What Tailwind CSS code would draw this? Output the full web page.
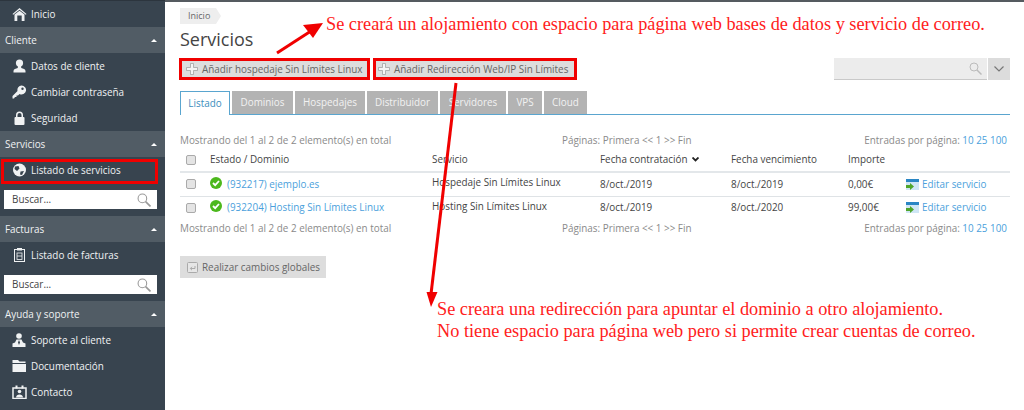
<!DOCTYPE html>
<html lang="es">
<head>
  <meta charset="UTF-8">
  <title>Servicios</title>
  <script src="https://cdn.jsdelivr.net/npm/@tailwindcss/browser@4"></script>
</head>
<body class="w-[1024px] h-[410px] overflow-hidden bg-white font-['Open_Sans',sans-serif] text-[9.9px] text-[#444]">
<div class="relative flex w-[1024px] h-[410px]">

  <!-- Sidebar -->
  <aside class="w-[165px] h-full shrink-0 bg-[#38444f] text-[#f0f2f3] border-t border-[#2c353e]">
    <a class="flex items-center h-[26px] pl-[12px]">
      <svg class="w-[15px] h-[13px] mr-[4px] shrink-0" viewBox="0 0 15 13" fill="#eef0f2"><path d="M7.500 0 14.500 6 13.800 6.800 7.500 1.800 1.200 6.800.5 6Z"/><path d="M2.500 6.500 7.500 2.800 12.500 6.500V13H9.700V7.500H5.300V13H2.500Z"/></svg>
      <span>Inicio</span>
    </a>
    <div class="flex items-center justify-between h-[26px] px-[5px] bg-[#515c65]"><span>Cliente</span><span class="w-0 h-0 mr-[3px] border-x-[3px] border-x-transparent border-b-[3px] border-b-white"></span></div>
    <a class="flex items-center h-[26px] pl-[12px]">
      <svg class="w-[15px] h-[14px] mr-[4px] shrink-0" viewBox="0 0 15 14" fill="#f0f2f3"><circle cx="7.500" cy="4" r="3.600"/><path d="M5.800 6.500h3.400V9c2 .6 4.300 1.200 4.300 3v1.500h-12V12c0-1.800 2.300-2.400 4.300-3Z"/></svg>
      <span>Datos de cliente</span>
    </a>
    <a class="flex items-center h-[26px] pl-[12px]">
      <svg class="w-[15px] h-[14px] mr-[4px] shrink-0" viewBox="0 0 15 14" fill="#f0f2f3"><path d="M9.500 0.500a4.500 4.500 0 1 1-2 8.500L6 10.500H4.500V12H3L2 13.500H0.500V11L5.500 6A4.500 4.500 0 0 1 9.500 0.500ZM10.500 2.500a1.200 1.200 0 1 0 0 2.400 1.200 1.200 0 0 0 0-2.400Z"/></svg>
      <span>Cambiar contraseña</span>
    </a>
    <a class="flex items-center h-[26px] pl-[12px]">
      <svg class="w-[15px] h-[14px] mr-[4px] shrink-0" viewBox="0 0 15 14" fill="#f0f2f3"><path d="M4 6V4a3.500 3.500 0 0 1 7 0v2H9.500V4a2 2 0 0 0-4 0v2Z"/><rect x="2.500" y="6" width="10" height="8" rx="1"/></svg>
      <span>Seguridad</span>
    </a>
    <div class="flex items-center justify-between h-[26px] px-[5px] bg-[#515c65]"><span>Servicios</span><span class="w-0 h-0 mr-[3px] border-x-[3px] border-x-transparent border-b-[3px] border-b-white"></span></div>
    <a class="flex items-center h-[26px] pl-[12px]">
      <svg class="w-[15px] h-[14px] mr-[4px] shrink-0" viewBox="0 0 15 14"><circle cx="7.500" cy="7" r="6.500" fill="#f0f2f3"/><path d="M3 3.500 6.500 3 7.500 5.500 5 8 2.500 6ZM8.500 8.500 12 8 10 12 8 11.500Z" fill="#38444f"/></svg>
      <span>Listado de servicios</span>
    </a>
    <div class="flex items-center justify-between h-[19px] ml-[4px] mr-[8px] mt-[7px] mb-[7px] pl-[8px] pr-[6px] bg-white text-[#444]">
      <span>Buscar...</span>
      <svg class="w-[14px] h-[14px]" viewBox="0 0 13 13" fill="none" stroke="#999"><circle cx="5" cy="5" r="4"/><path d="M8 8 12.500 12.500" stroke-width="1.500"/></svg>
    </div>
    <div class="flex items-center justify-between h-[26px] px-[5px] bg-[#515c65]"><span>Facturas</span><span class="w-0 h-0 mr-[3px] border-x-[3px] border-x-transparent border-b-[3px] border-b-white"></span></div>
    <a class="flex items-center h-[26px] pl-[12px]">
      <svg class="w-[15px] h-[14px] mr-[4px] shrink-0" viewBox="0 0 15 14" fill="none" stroke="#f0f2f3"><rect x="2.500" y="1.500" width="10" height="12"/><rect x="5" y="0" width="5" height="2.500" fill="#f0f2f3" stroke="none"/><rect x="5" y="5" width="5" height="6.500" stroke-width=".8"/><path d="M5 8h5" stroke-width=".8"/></svg>
      <span>Listado de facturas</span>
    </a>
    <div class="flex items-center justify-between h-[19px] ml-[4px] mr-[8px] mt-[7px] mb-[7px] pl-[8px] pr-[6px] bg-white text-[#444]">
      <span>Buscar...</span>
      <svg class="w-[14px] h-[14px]" viewBox="0 0 13 13" fill="none" stroke="#999"><circle cx="5" cy="5" r="4"/><path d="M8 8 12.500 12.500" stroke-width="1.500"/></svg>
    </div>
    <div class="flex items-center justify-between h-[26px] px-[5px] bg-[#515c65]"><span>Ayuda y soporte</span><span class="w-0 h-0 mr-[3px] border-x-[3px] border-x-transparent border-b-[3px] border-b-white"></span></div>
    <a class="flex items-center h-[26px] pl-[12px]">
      <svg class="w-[15px] h-[14px] mr-[4px] shrink-0" viewBox="0 0 15 14" fill="#f0f2f3"><circle cx="7" cy="3" r="2.800"/><path d="M4.500 6.500h5L11 9.500l2.500 1V14H.5v-3.500L3 9.500Z"/><path d="M7 7 6 9.500 7 12 8 9.500Z" fill="#38444f"/></svg>
      <span>Soporte al cliente</span>
    </a>
    <a class="flex items-center h-[26px] pl-[12px]">
      <svg class="w-[15px] h-[14px] mr-[4px] shrink-0" viewBox="0 0 15 14" fill="#f0f2f3"><path d="M.5 1h5.500l1.500 1.500h6V4H.5Z"/><path d="M.5 5h13.500v8H.5Z"/></svg>
      <span>Documentación</span>
    </a>
    <a class="flex items-center h-[26px] pl-[12px]">
      <svg class="w-[15px] h-[14px] mr-[4px] shrink-0" viewBox="0 0 15 14"><rect x="1" y="3" width="13" height="10.500" fill="none" stroke="#f0f2f3" stroke-width="1.500"/><rect x="3.500" y="0.500" width="2" height="3" fill="#f0f2f3"/><rect x="9.500" y="0.500" width="2" height="3" fill="#f0f2f3"/><circle cx="7.500" cy="6.500" r="1.800" fill="#f0f2f3"/><path d="M4 12.500c0-4 7-4 7 0Z" fill="#f0f2f3"/></svg>
      <span>Contacto</span>
    </a>
  </aside>

  <!-- Main -->
  <main class="flex-1 border-t-2 border-[#555b60] pl-[15px] pr-[14px]">
    <div class="flex mt-[6px] h-[16px]">
      <span class="flex items-center pl-[8px] pr-[6px] bg-[#eeeeee] text-[9px] text-[#666]">Inicio</span>
      <span class="w-0 h-0 border-y-[8px] border-y-transparent border-l-[5px] border-l-[#eeeeee]"></span>
    </div>
    <h1 class="mt-[3px] h-[24px] text-[18px] leading-[24px] text-[#444]">Servicios</h1>

    <div class="flex items-start mt-[7px] h-[22px]">
      <div class="flex items-center shrink-0 w-[191px] h-[22px] -ml-[1px] border-[3px] border-[#f00000] bg-[#dddddd] pl-[4px] text-[#666]">
        <svg class="w-[12px] h-[12px] mr-[4px] shrink-0" viewBox="0 0 12 12" fill="#f4f4f4" stroke="#999" stroke-width=".7"><path d="M4.500.5h3v4h4v3h-4v4h-3v-4h-4v-3h4Z"/></svg>
        <span class="whitespace-nowrap">Añadir hospedaje Sin Límites Linux</span>
      </div>
      <div class="flex items-center shrink-0 w-[204px] h-[22px] ml-[3px] border-[3px] border-[#f00000] bg-[#dddddd] pl-[2px] text-[#666]">
        <svg class="w-[12px] h-[12px] mr-[4px] shrink-0" viewBox="0 0 12 12" fill="#f4f4f4" stroke="#999" stroke-width=".7"><path d="M4.500.5h3v4h4v3h-4v4h-3v-4h-4v-3h4Z"/></svg>
        <span class="whitespace-nowrap">Añadir Redirección Web/IP Sin Límites</span>
      </div>
      <div class="ml-auto flex h-[22px]">
        <div class="flex items-center justify-end w-[153px] bg-[#ececec] border-b border-[#c9c9c9] pr-[5px]">
          <svg class="w-[13px] h-[13px]" viewBox="0 0 13 13" fill="none" stroke="#bbb"><circle cx="5" cy="5" r="4"/><path d="M8 8 12.500 12.500" stroke-width="1.500"/></svg>
        </div>
        <div class="flex items-center justify-center w-[22px] ml-[1px] bg-[#dcdcdc]">
          <svg class="w-[10px] h-[6px]" viewBox="0 0 10 6" fill="none" stroke="#777" stroke-width="1.200"><path d="M.5.5 5 5 9.500.5"/></svg>
        </div>
      </div>
    </div>

    <!-- Tabs -->
    <div class="flex items-end gap-[2px] mt-[11px] h-[24px] border-b border-[#5aa5cf] text-[#f2f2f2]">
      <span class="flex items-center justify-center w-[50px] h-[24px] -mb-[1px] bg-white border border-b-0 border-[#5aa5cf] text-[#3b8dbd]">Listado</span>
      <span class="flex items-center justify-center w-[61px] h-[23px] bg-[#b3b3b3]">Dominios</span>
      <span class="flex items-center justify-center w-[70px] h-[23px] bg-[#b3b3b3]">Hospedajes</span>
      <span class="flex items-center justify-center w-[71px] h-[23px] bg-[#b3b3b3]">Distribuidor</span>
      <span class="flex items-center justify-center w-[66px] h-[23px] bg-[#b3b3b3]">Servidores</span>
      <span class="flex items-center justify-center w-[34px] h-[23px] bg-[#b3b3b3]">VPS</span>
      <span class="flex items-center justify-center w-[43px] h-[23px] bg-[#b3b3b3]">Cloud</span>
    </div>

    <!-- Listing -->
    <div class="grid grid-cols-[382px_1fr_auto] items-center mt-[17px] h-[16px] pr-[3px] text-[#8a8a8a]">
      <span>Mostrando del 1 al 2 de 2 elemento(s) en total</span>
      <span>Páginas: Primera &lt;&lt; 1 &gt;&gt; Fin</span>
      <span>Entradas por página: <span class="text-[#4b9fdc]">10 25 100</span></span>
    </div>

    <table class="w-[830px] table-fixed border-collapse">
      <colgroup>
        <col class="w-[30px]"><col class="w-[222px]"><col class="w-[168px]"><col class="w-[131px]"><col class="w-[117px]"><col class="w-[58px]"><col class="w-[104px]">
      </colgroup>
      <thead>
        <tr class="h-[24px] border-b-2 border-[#e3e7ea] text-left text-[#444]">
          <th class="font-normal pl-[6px]"><span class="block w-[10px] h-[10px] rounded-[2px] border border-[#aaa] bg-[#e4e4e4]"></span></th>
          <th class="font-normal">Estado / Dominio</th>
          <th class="font-normal">Servicio</th>
          <th class="font-normal"><span class="inline-flex items-center gap-[5px]">Fecha contratación<svg class="w-[7px] h-[5px]" viewBox="0 0 7 5" fill="none" stroke="#222" stroke-width="1.800"><path d="M.5.5 3.500 3.500 6.500.5"/></svg></span></th>
          <th class="font-normal">Fecha vencimiento</th>
          <th class="font-normal">Importe</th>
          <th></th>
        </tr>
      </thead>
      <tbody>
        <tr class="h-[24px] border-b border-[#dfe3e6]">
          <td class="pl-[6px]"><span class="block w-[10px] h-[10px] rounded-[2px] border border-[#aaa] bg-[#e4e4e4]"></span></td>
          <td><span class="flex items-center gap-[5px] text-[#4b9fdc]"><svg class="w-[12px] h-[12px] mb-[3px] shrink-0" viewBox="0 0 12 12"><circle cx="6" cy="6" r="6" fill="#4cb81c"/><path d="M3 6 5.200 8.200 9 4" fill="none" stroke="#fff" stroke-width="1.800"/></svg>(932217) ejemplo.es</span></td>
          <td class="pb-[3px]">Hospedaje Sin Límites Linux</td>
          <td>8/oct./2019</td>
          <td>8/oct./2019</td>
          <td>0,00€</td>
          <td><span class="flex items-center gap-[3px] text-[#4b9fdc]"><svg class="w-[13px] h-[11px] shrink-0" viewBox="0 0 13 11"><rect width="13" height="11" fill="#cfe6f5"/><rect width="13" height="3" fill="#2a86c4"/><path d="M0 6h4V4l4 3.500L4 11V9H0Z" fill="#4fa52a"/></svg>Editar servicio</span></td>
        </tr>
        <tr class="h-[23px]">
          <td class="pl-[6px]"><span class="block w-[10px] h-[10px] rounded-[2px] border border-[#aaa] bg-[#e4e4e4]"></span></td>
          <td><span class="flex items-center gap-[5px] text-[#4b9fdc]"><svg class="w-[12px] h-[12px] mb-[3px] shrink-0" viewBox="0 0 12 12"><circle cx="6" cy="6" r="6" fill="#4cb81c"/><path d="M3 6 5.200 8.200 9 4" fill="none" stroke="#fff" stroke-width="1.800"/></svg>(932204) Hosting Sin Límites Linux</span></td>
          <td class="pb-[3px]">Hosting Sin Límites Linux</td>
          <td>8/oct./2019</td>
          <td>8/oct./2020</td>
          <td>99,00€</td>
          <td><span class="flex items-center gap-[3px] text-[#4b9fdc]"><svg class="w-[13px] h-[11px] shrink-0" viewBox="0 0 13 11"><rect width="13" height="11" fill="#cfe6f5"/><rect width="13" height="3" fill="#2a86c4"/><path d="M0 6h4V4l4 3.500L4 11V9H0Z" fill="#4fa52a"/></svg>Editar servicio</span></td>
        </tr>
      </tbody>
    </table>

    <div class="grid grid-cols-[382px_1fr_auto] items-center h-[16px] mt-[1px] pr-[3px] text-[#8a8a8a]">
      <span>Mostrando del 1 al 2 de 2 elemento(s) en total</span>
      <span>Páginas: Primera &lt;&lt; 1 &gt;&gt; Fin</span>
      <span>Entradas por página: <span class="text-[#4b9fdc]">10 25 100</span></span>
    </div>

    <div class="flex items-center w-[146px] h-[22px] mt-[20px] pl-[7px] bg-[#dddddd] text-[#666]">
      <svg class="w-[11px] h-[11px] mr-[4px] shrink-0" viewBox="0 0 11 11" fill="#e6e6e6" stroke="#aaa"><rect x=".5" y=".5" width="10" height="10" rx="1"/><path d="M8 4v2.500H3.500M5 4.800 3.300 6.500 5 8.200" fill="none"/></svg>
      <span class="whitespace-nowrap">Realizar cambios globales</span>
    </div>
  </main>

  <!-- Red annotations over the page -->
  <svg class="absolute left-0 top-0 w-[1024px] h-[410px] pointer-events-none" viewBox="0 0 1024 410">
    <path d="M277 53 311 31" stroke="#f00000" stroke-width="3"/>
    <path d="M323 23 303 25 313 38Z" fill="#f00000"/>
    <path d="M456 83 431 294" stroke="#f00000" stroke-width="3"/>
    <path d="M426.500 292 437.500 292 431 307Z" fill="#f00000"/>
  </svg>
  <div class="absolute left-[326px] top-[13px] whitespace-nowrap font-['Liberation_Serif',serif] text-[18.3px] leading-[22px] text-[#ff2020]">Se creará un alojamiento con espacio para página web bases de datos y servicio de correo.</div>
  <div class="absolute left-[437px] top-[298px] whitespace-nowrap font-['Liberation_Serif',serif] text-[18.3px] leading-[22px] text-[#ff2020]">Se creara una redirección para apuntar el dominio a otro alojamiento.<br>No tiene espacio para página web pero si permite crear cuentas de correo.</div>
  <div class="absolute left-[1px] top-[159px] w-[157px] h-[25px] border-[3px] border-[#f00000]"></div>
</div>
</body>
</html>
